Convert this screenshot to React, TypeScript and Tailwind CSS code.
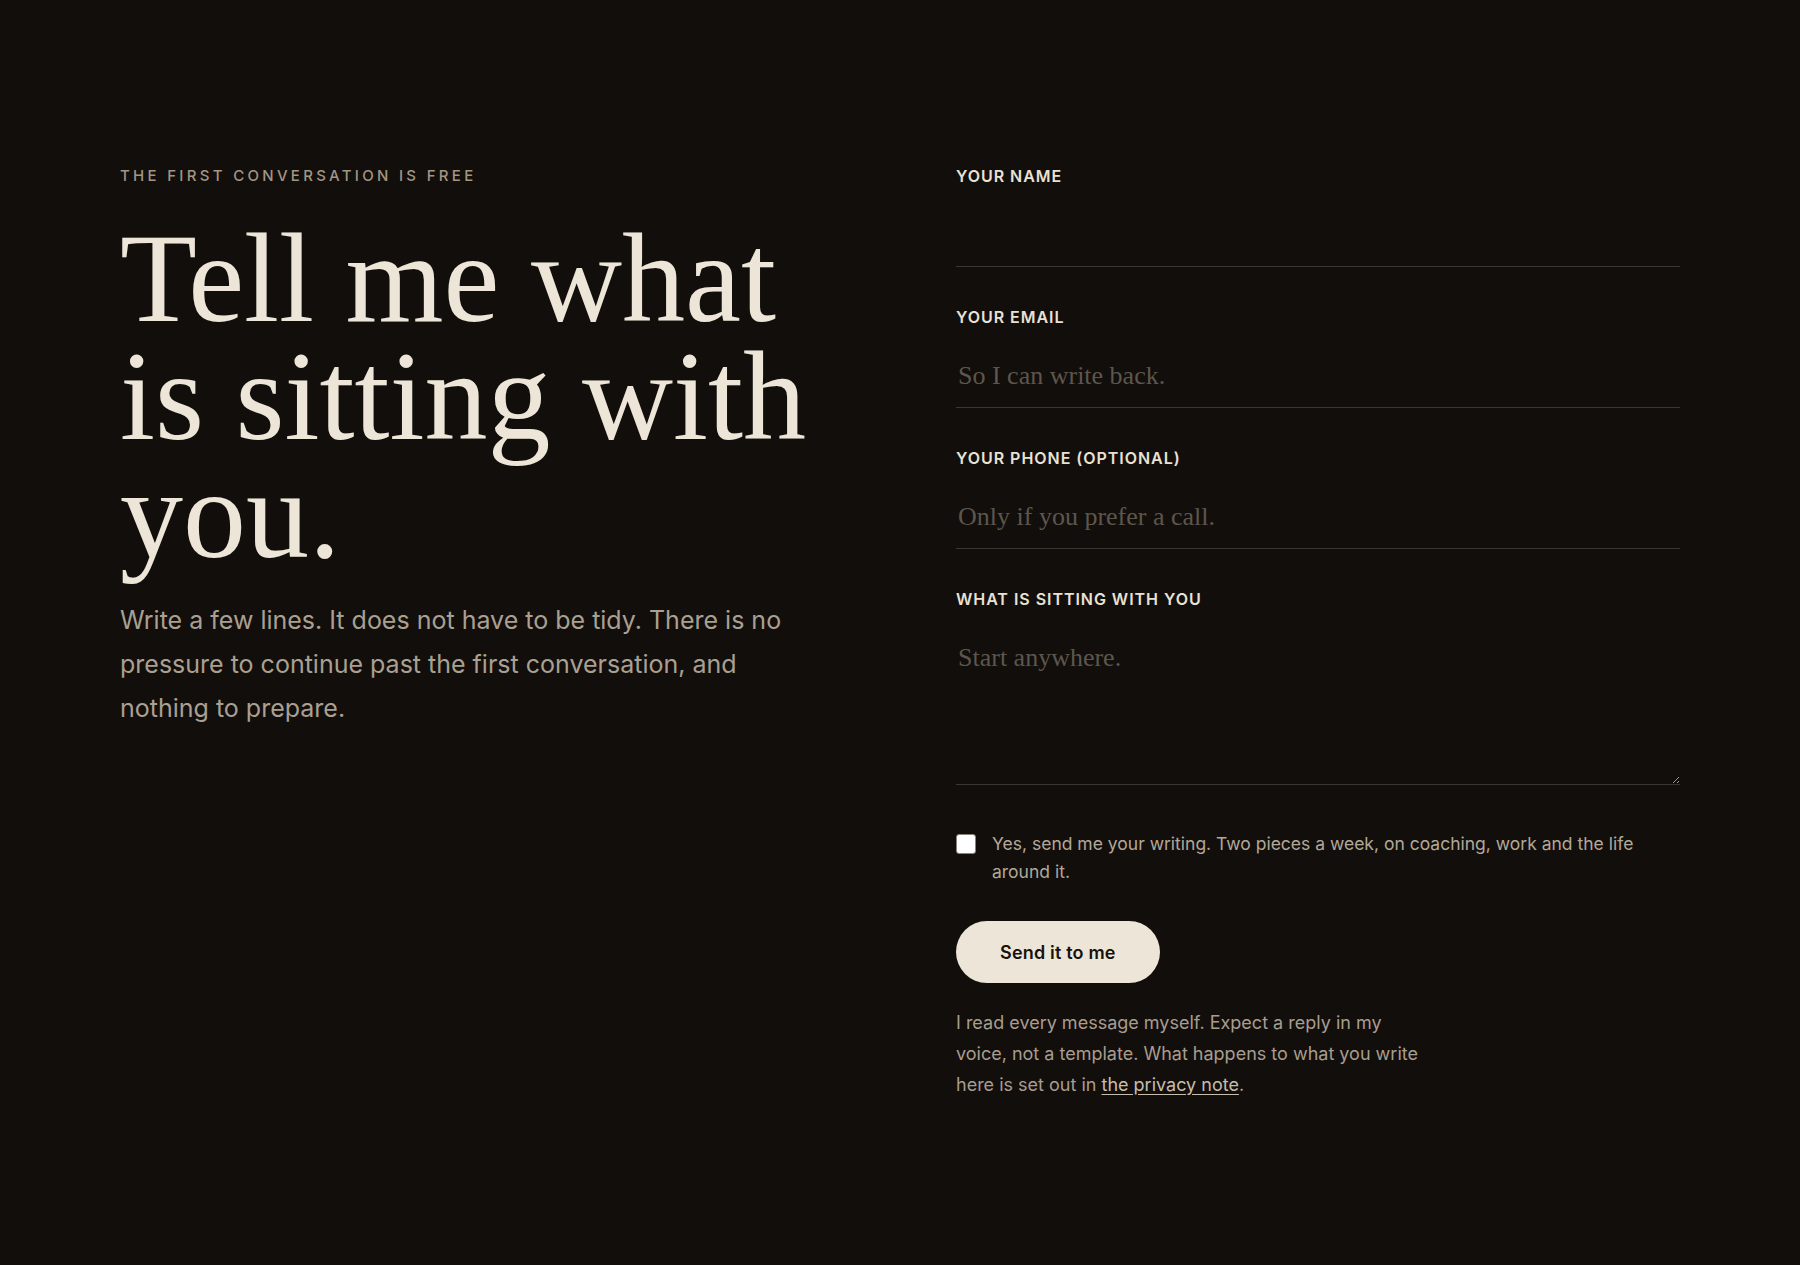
import React from 'react';

const serif = "font-['Liberation_Serif','Times_New_Roman',serif]";

const fields = [
  { id: 'name', label: 'Your name', placeholder: '' },
  { id: 'email', label: 'Your email', placeholder: 'So I can write back.' },
  { id: 'phone', label: 'Your phone (optional)', placeholder: 'Only if you prefer a call.' },
];

export default function App() {
  return (
    <div className="min-h-screen bg-[#120e0b] font-['Inter',sans-serif] antialiased">
      <div className="grid grid-cols-2 gap-28 px-[120px] pt-[166px] pb-[160px]">
        {/* Left: intro */}
        <div>
          <p className="text-[15px] leading-5 font-medium uppercase tracking-[0.22em] text-[#a29684]">
            The first conversation is free
          </p>
          <h1 className="mt-[34px] text-[126px] leading-[118px] text-[#ede6d8] font-['Liberation_Serif','Times_New_Roman',serif]">
            Tell me what is sitting with you.
          </h1>
          <p className="mt-6 max-w-[690px] text-[25px] leading-[44px] text-[#aaa092]">
            Write a few lines. It does not have to be tidy. There is no pressure to continue past the
            first conversation, and nothing to prepare.
          </p>
        </div>

        {/* Right: form */}
        <form className="flex flex-col" onSubmit={e => e.preventDefault()}>
          <div className="flex flex-col gap-10">
            {fields.map(f => (
              <label key={f.id} className="flex flex-col">
                <span className="text-[16px] leading-5 font-semibold uppercase tracking-[0.06em] text-[#e9e2d4]">
                  {f.label}
                </span>
                <input
                  type="text"
                  placeholder={f.placeholder}
                  className={`mt-2.5 w-full bg-transparent border-b border-[#3b3630] px-0.5 pt-[20px] pb-[12px] text-[26px] leading-[38px] text-[#ede6d8] placeholder:text-[#5d564d] outline-none ${serif}`}
                />
              </label>
            ))}
            <label className="flex flex-col">
              <span className="text-[16px] leading-5 font-semibold uppercase tracking-[0.06em] text-[#e9e2d4]">
                What is sitting with you
              </span>
              <textarea
                placeholder="Start anywhere."
                className={`mt-2.5 h-[166px] w-full bg-transparent border-b border-[#3b3630] px-0.5 pt-[20px] pb-[12px] text-[26px] leading-[38px] text-[#ede6d8] placeholder:text-[#5d564d] outline-none ${serif}`}
              />
            </label>
          </div>

          <label className="mt-[45px] flex items-start gap-4">
            <input
              type="checkbox"
              className="mt-1 h-5 w-5 shrink-0 appearance-none rounded-[3px] border border-[#8a8276] bg-white"
            />
            <span className="max-w-[660px] text-[17.5px] leading-[27.5px] text-[#b2a898]">
              Yes, send me your writing. Two pieces a week, on coaching, work and the life around it.
            </span>
          </label>

          <div className="mt-9">
            <button
              type="submit"
              className="inline-flex h-[62px] items-center rounded-full bg-[#ede6d8] px-11 text-[18px] font-semibold tracking-[0.01em] text-[#17120e]"
            >
              Send it to me
            </button>
          </div>

          <p className="mt-6 max-w-[466px] text-[18px] leading-[31px] text-[#a89d8e]">
            I read every message myself. Expect a reply in my voice, not a template. What happens to what
            you write here is set out in{' '}
            <a href="#" className="underline underline-offset-[3px] text-[#c6bdae]">
              the privacy note
            </a>
            .
          </p>
        </form>
      </div>
    </div>
  );
}
